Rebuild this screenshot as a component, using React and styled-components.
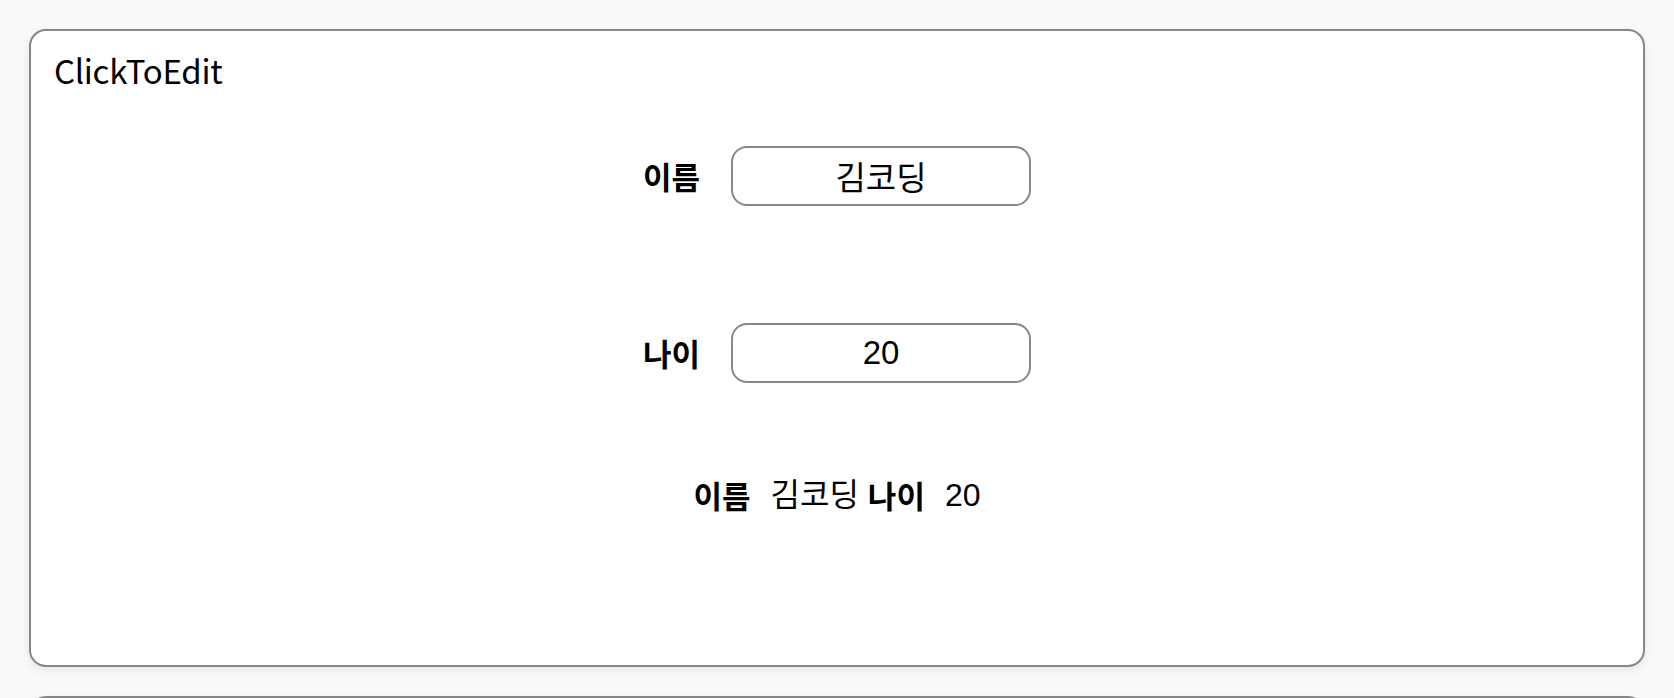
import React, { useState } from "react";
import styled, { createGlobalStyle } from "styled-components";

const GlobalStyle = createGlobalStyle`
  html, body {
    margin: 0;
    padding: 0;
    background: #f9f9f9;
  }
  body {
    font-family: "Noto Sans CJK KR", "Noto Sans", sans-serif;
    color: #000;
  }
`;

const Page = styled.div`
  display: flex;
  flex-direction: column;
  gap: 29px;
  padding: 29px 29px 0;
  height: 698px;
  overflow: hidden;
  box-sizing: border-box;
`;

const Card = styled.section`
  flex: none;
  height: ${(p) => p.$height}px;
  box-sizing: border-box;
  background: #fff;
  border: 2px solid #878787;
  border-radius: 17px;
  box-shadow: 0 4px 10px rgba(0, 0, 0, 0.07);
  padding: 20px 23px;
  display: flex;
  flex-direction: column;
`;

const Title = styled.h2`
  margin: 0;
  font-family: "Noto Sans CJK KR", sans-serif;
  font-weight: 400;
  font-size: 33px;
  line-height: 38px;
  letter-spacing: -0.3px;
`;

const Rows = styled.div`
  display: flex;
  flex-direction: column;
  align-items: center;
  margin-top: 57px;
  gap: 117px;
`;

const Row = styled.div`
  display: flex;
  align-items: center;
  gap: 31px;
`;

const Label = styled.label`
  font-family: "Noto Sans CJK KR", sans-serif;
  font-weight: 700;
  font-size: 31px;
  line-height: 36px;
`;

const Field = styled.input`
  width: 300px;
  height: 60px;
  box-sizing: border-box;
  border: 2px solid #878787;
  border-radius: 16px;
  background: #fff;
  text-align: center;
  font-family: "Liberation Sans", "Noto Sans CJK KR", sans-serif;
  font-size: 33px;
  color: #000;
  outline: none;
  padding: 0 10px;
`;

const Summary = styled.div`
  display: flex;
  justify-content: center;
  align-items: center;
  margin-top: 93px;
  font-family: "Liberation Sans", "Noto Sans CJK KR", sans-serif;
  font-size: 32px;
  line-height: 38px;
`;

const SumLabel = styled.strong`
  font-family: "Noto Sans CJK KR", sans-serif;
  font-weight: 700;
  font-size: 31px;
  margin-right: 20px;
`;

const SumValue = styled.span`
  margin-right: ${(p) => (p.$last ? 0 : 9)}px;
`;

export default function App() {
  const [name, setName] = useState("김코딩");
  const [age, setAge] = useState("20");
  return (
    <>
      <GlobalStyle />
      <Page>
        <Card $height={638}>
          <Title>ClickToEdit</Title>
          <Rows>
            <Row>
              <Label>이름</Label>
              <Field value={name} onChange={(e) => setName(e.target.value)} />
            </Row>
            <Row>
              <Label>나이</Label>
              <Field value={age} onChange={(e) => setAge(e.target.value)} />
            </Row>
          </Rows>
          <Summary>
            <SumLabel>이름</SumLabel>
            <SumValue>{name}</SumValue>
            <SumLabel>나이</SumLabel>
            <SumValue $last>{age}</SumValue>
          </Summary>
        </Card>
        <Card $height={200} />
      </Page>
    </>
  );
}
